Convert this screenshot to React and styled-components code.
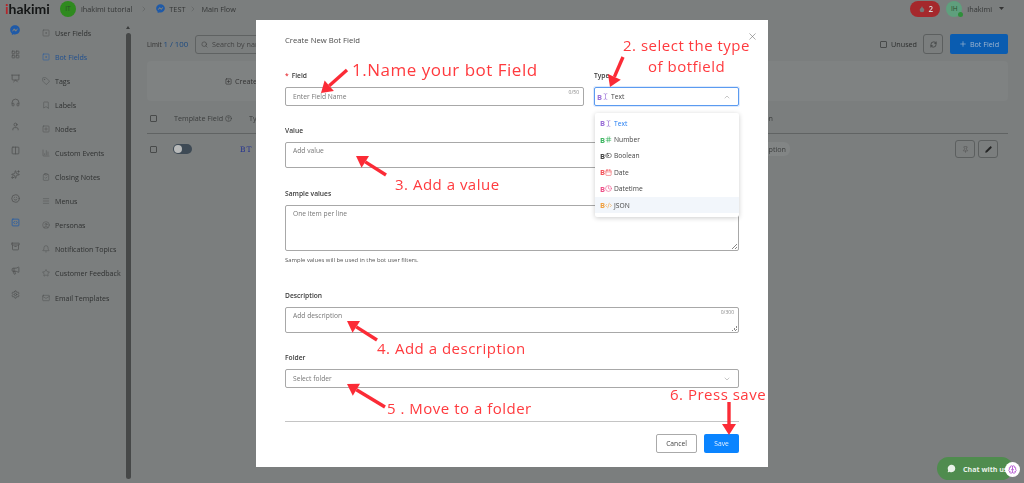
import React from 'react'
import styled, { createGlobalStyle } from 'styled-components'
import {
  LayoutGrid, Presentation, Headphones, User, Columns2, Sparkles, Smile, SquareCode, Archive,
  Megaphone, Settings, SquareDot, Tag, Bookmark, SquarePlus, BarChart3, ClipboardCheck, Menu,
  CircleUser, Bell, Star, Mail, Search, RefreshCw, Plus, Pencil, Pin, X, ChevronDown, ChevronUp,
  ChevronRight, Hash, Calendar, Clock, CodeXml, TextCursor, CircleHelp, Droplet, MessageCircle,
  Brain, ToggleLeft,
} from 'lucide-react'
import { FaFacebookMessenger } from 'react-icons/fa'

const GlobalStyle = createGlobalStyle`
  html, body { margin: 0; padding: 0; background: #7b7e7e; }
  body { font-family: "Open Sans", "Liberation Sans", sans-serif; font-size: 7.2px; color: #2c2e2e; overflow: hidden; }
  * { box-sizing: border-box; }
`

const Page = styled.div`
  width: 1024px;
  height: 483px;
  display: flex;
  flex-direction: column;
  overflow: hidden;
  filter: blur(0.5px);
`

const TopBar = styled.header`
  height: 17px;
  flex: none;
  display: flex;
  align-items: center;
  padding: 0 20px 0 5px;
`

const Logo = styled.div`
  font-family: "Lato", sans-serif;
  font-weight: 700;
  font-size: 14px;
  width: 55px;
  color: #141616;
  span { color: #b3262b; }
`

const Avatar = styled.div`
  width: 16px;
  height: 16px;
  border-radius: 50%;
  background: ${(p) => p.$bg};
  display: flex;
  align-items: center;
  justify-content: center;
  font-size: 6.5px;
  margin-right: 5px;
  position: relative;
  color: #2b4a2b;
`

const OnlineDot = styled.i`
  position: absolute;
  right: -1px;
  bottom: 0;
  width: 5px;
  height: 5px;
  border-radius: 50%;
  background: #2f8f3a;
`

const Crumb = styled.span`
  font-size: 7.3px;
  color: #343636;
  margin-right: ${(p) => p.$gap || 0}px;
  margin-left: ${(p) => p.$left || 0}px;
`

const Spacer = styled.div`
  flex: 1;
`

const MessengerMark = styled(FaFacebookMessenger)`
  margin: 0 4px 0 8px;
  color: #1f5aa8;
`

const AlertPill = styled.div`
  width: 30px;
  height: 16px;
  border-radius: 8px;
  background: #a5282c;
  color: #d8d8d8;
  display: flex;
  align-items: center;
  justify-content: center;
  gap: 3px;
  font-size: 8px;
  font-weight: 600;
  margin-right: 6px;
`

const Body = styled.div`
  flex: 1;
  display: flex;
  min-height: 0;
`

const Rail = styled.nav`
  width: 30px;
  flex: none;
  display: flex;
  flex-direction: column;
  align-items: center;
  padding-top: 1px;
`

const RailItem = styled.div`
  height: 24px;
  flex: none;
  display: flex;
  align-items: center;
  justify-content: center;
  color: ${(p) => (p.$active ? '#1f5aa8' : '#505252')};
`

const SideList = styled.nav`
  width: 96px;
  flex: none;
  padding-top: 4px;
  padding-left: 12px;
`

const SideItem = styled.div`
  height: 24.05px;
  display: flex;
  align-items: center;
  gap: 5px;
  white-space: nowrap;
  font-size: 7.1px;
  color: ${(p) => (p.$active ? '#1f4f8f' : '#2f3131')};
  svg { color: ${(p) => (p.$active ? '#1f5aa8' : '#505252')}; flex: none; }
`

const ScrollTrack = styled.div`
  width: 5px;
  flex: none;
  margin-top: 16px;
  margin-bottom: 4px;
  background: #464848;
  border-radius: 3px;
  position: relative;
  &::before {
    content: '';
    position: absolute;
    top: -7px;
    left: 0;
    border-left: 2.5px solid transparent;
    border-right: 2.5px solid transparent;
    border-bottom: 3px solid #3a3c3c;
  }
`

const Main = styled.main`
  flex: 1;
  min-width: 0;
  padding: 17px 16px 0 16px;
`

const Toolbar = styled.div`
  display: flex;
  align-items: center;
  height: 20px;
`

const LimitText = styled.span`
  font-size: 6.4px;
  color: #333;
  width: 48px;
  flex: none;
  white-space: nowrap;
  b { font-size: 7.8px; font-weight: 400; color: #1c4a80; }
`

const SearchBox = styled.div`
  width: 200px;
  height: 19px;
  border: 1px solid #5f6262;
  border-radius: 3px;
  display: flex;
  align-items: center;
  gap: 4px;
  padding-left: 5px;
  color: #444;
  white-space: nowrap;
`

const CheckSquare = styled.i`
  width: 7px;
  height: 7px;
  border: 1px solid #484a4a;
  border-radius: 1px;
  flex: none;
  margin-right: ${(p) => p.$gap || 0}px;
`

const GhostButton = styled.button`
  width: ${(p) => p.$w || 20}px;
  height: ${(p) => p.$h || 20}px;
  margin-left: ${(p) => p.$ml || 0}px;
  border: 1px solid #5c5f5f;
  border-radius: 3px;
  background: transparent;
  display: flex;
  align-items: center;
  justify-content: center;
  padding: 0;
  color: #2c2e2e;
`

const AddButton = styled.button`
  width: 58px;
  height: 20px;
  margin-left: 7px;
  border: 0;
  border-radius: 2px;
  background: #0a5cb0;
  color: #9fb6cf;
  font: inherit;
  display: flex;
  align-items: center;
  justify-content: center;
  gap: 3px;
`

const Banner = styled.div`
  height: 40px;
  margin-top: 7px;
  border-radius: 4px;
  background: #7f8282;
  display: flex;
  align-items: center;
  padding-left: 78px;
  gap: 3px;
  color: #333;
`

const TableHead = styled.div`
  height: 31px;
  margin-top: 2px;
  border-bottom: 1px solid #606363;
  display: flex;
  align-items: center;
  padding-left: 3px;
  gap: 17px;
  color: #3c3e3e;
`

const HeadCell = styled.span`
  display: flex;
  align-items: center;
  gap: 2px;
  white-space: nowrap;
  margin-right: ${(p) => p.$right || 0}px;
`

const TableRow = styled.div`
  height: 30px;
  display: flex;
  align-items: center;
  padding-left: 3px;
  padding-right: 10px;
`

const Toggle = styled.i`
  width: 19px;
  height: 10px;
  margin-left: 16px;
  margin-right: 48px;
  border-radius: 5px;
  background: #3e4a55;
  display: flex;
  align-items: center;
  padding-left: 1px;
  &::before {
    content: '';
    width: 8px;
    height: 8px;
    border-radius: 50%;
    background: #b8baba;
  }
`

const BTMark = styled.span`
  color: #27358f;
  font-family: "DejaVu Serif", serif;
  font-size: 7.5px;
  letter-spacing: 1px;
`

const DescChip = styled.span`
  margin-right: 165px;
  padding: 2px 4px;
  border-radius: 6px;
  background: #828585;
  color: #3c3e3e;
`

const Backdrop = styled.div`
  position: fixed;
  inset: 0;
  display: flex;
  justify-content: center;
  padding-top: 20px;
  filter: blur(0.35px);
`

const Modal = styled.section`
  width: 512px;
  height: 447px;
  background: #fff;
  position: relative;
  padding: 16px 29px 0;
  color: #333;
`

const ModalTitle = styled.h2`
  margin: 0 0 26px;
  height: 9px;
  line-height: 9px;
  font-size: 7.7px;
  font-weight: 400;
  color: #4b4b4b;
`

const CloseIcon = styled.span`
  position: absolute;
  top: 11px;
  right: 10px;
  color: #666;
  display: flex;
`

const TwoCols = styled.div`
  display: flex;
  gap: 10px;
`

const Field = styled.div`
  flex: ${(p) => (p.$side ? '0 0 145px' : '1')};
  margin-top: ${(p) => p.$mt || 0}px;
  position: relative;
`

const Label = styled.label`
  display: block;
  height: 9px;
  line-height: 9px;
  margin-bottom: 7px;
  font-size: 6.7px;
  font-weight: 600;
  color: #3a3a3a;
  em { color: #e8333a; font-style: normal; margin-right: 3px; }
`

const InputBox = styled.div`
  height: ${(p) => p.$h || 19}px;
  border: 1px solid ${(p) => (p.$focus ? '#5b9bf0' : '#a8a8a8')};
  border-radius: 2px;
  padding: ${(p) => (p.$area ? '3px' : '0')} 7px 0;
  display: flex;
  align-items: ${(p) => (p.$area ? 'flex-start' : 'center')};
  justify-content: space-between;
  color: #777;
  font-size: 6.7px;
  position: relative;
  box-shadow: ${(p) => (p.$focus ? '0 0 0 1px rgba(70,140,240,.18)' : 'none')};
`

const Counter = styled.span`
  position: absolute;
  top: 1px;
  right: 4px;
  font-size: 5px;
  color: #888;
`

const Resize = styled.i`
  position: absolute;
  right: 1px;
  bottom: 1px;
  width: 5px;
  height: 5px;
  background: linear-gradient(135deg, transparent 50%, #888 50%, #888 60%, transparent 60%, transparent 75%, #888 75%, #888 85%, transparent 85%);
`

const Hint = styled.p`
  margin: 5px 0 0;
  height: 8px;
  line-height: 8px;
  font-size: 5.9px;
  color: #555;
`

const ValueRow = styled.span`
  display: flex;
  align-items: center;
  margin-left: -5px;
  color: #444;
`

const Divider = styled.hr`
  margin: 33px 0 0;
  border: 0;
  border-top: 1px solid #c4c4c4;
`

const Actions = styled.div`
  display: flex;
  justify-content: flex-end;
  gap: 7px;
  margin-top: 12px;
`

const CancelButton = styled.button`
  width: 41px;
  height: 19px;
  border: 1px solid #aaa;
  border-radius: 2px;
  background: #fff;
  color: #444;
  font: inherit;
  font-size: 6.7px;
  padding: 0;
`

const SaveButton = styled.button`
  width: 35px;
  height: 19px;
  border: 0;
  border-radius: 2px;
  background: #0a84ff;
  color: #e6f1ff;
  font: inherit;
  font-size: 6.7px;
  padding: 0;
`

const Dropdown = styled.ul`
  position: absolute;
  top: 93px;
  left: 339px;
  width: 144px;
  height: 104px;
  margin: 0;
  padding: 2px 0 0;
  list-style: none;
  background: #fff;
  border-radius: 2px;
  box-shadow: 0 1px 5px rgba(0, 0, 0, 0.2);
`

const Option = styled.li`
  height: 16.4px;
  display: flex;
  align-items: center;
  padding-left: 5px;
  font-size: 6.7px;
  color: ${(p) => (p.$selected ? '#1f7bf2' : '#444')};
  background: ${(p) => (p.$hover ? '#f2f6fb' : 'transparent')};
`

const TypeMark = styled.span`
  width: 14px;
  display: inline-flex;
  align-items: center;
  color: ${(p) => p.$color};
  font-size: 7.5px;
  font-weight: 700;
  flex: none;
`

const Note = styled.div`
  position: absolute;
  left: ${(p) => p.$x}px;
  top: ${(p) => p.$y}px;
  font-family: "Open Sans", sans-serif;
  font-size: ${(p) => p.$size || 15}px;
  line-height: 20px;
  letter-spacing: 0.5px;
  color: #ff3a3e;
  white-space: nowrap;
  filter: blur(0.25px);
`

const ArrowLayer = styled.svg`
  position: absolute;
  inset: 0;
  width: 1024px;
  height: 483px;
  pointer-events: none;
`

const ChatPill = styled.div`
  position: fixed;
  left: 937px;
  top: 457px;
  width: 76px;
  height: 23px;
  border-radius: 12px;
  background: #4f8c4e;
  color: #e9f2e9;
  display: flex;
  align-items: center;
  gap: 7px;
  padding-left: 10px;
  font-weight: 700;
  font-size: 7.1px;
  white-space: nowrap;
  overflow: hidden;
`

const ChatBubble = styled.div`
  position: fixed;
  left: 1005px;
  top: 462px;
  width: 15px;
  height: 15px;
  border-radius: 50%;
  background: #fff;
  display: flex;
  align-items: center;
  justify-content: center;
  color: #b04fd0;
`

const railIcons = [
  [FaFacebookMessenger, '#1f5aa8'], [LayoutGrid], [Presentation], [Headphones], [User], [Columns2],
  [Sparkles], [Smile], [SquareCode, '#1f5aa8'], [Archive], [Megaphone], [Settings],
]

const sideItems = [
  ['User Fields', SquareDot], ['Bot Fields', SquareDot, true], ['Tags', Tag], ['Labels', Bookmark],
  ['Nodes', SquarePlus], ['Custom Events', BarChart3], ['Closing Notes', ClipboardCheck], ['Menus', Menu],
  ['Personas', CircleUser], ['Notification Topics', Bell], ['Customer Feedback', Star], ['Email Templates', Mail],
]

const typeOptions = [
  ['Text', TextCursor, '#9b6fd8', true],
  ['Number', Hash, '#3db561'],
  ['Boolean', ToggleLeft, '#444'],
  ['Date', Calendar, '#f2545b'],
  ['Datetime', Clock, '#ee4f88'],
  ['JSON', CodeXml, '#f0a040', false, true],
]

// tail and tip of each red arrow, in page pixels
const arrows = [
  [347, 70, 321, 93], [623, 57, 610, 87], [386, 175, 356, 156],
  [377, 340, 347, 321], [385, 407, 347, 384], [729, 402, 729, 435],
]

function Arrow({ from, to }) {
  const [x1, y1] = from
  const [x2, y2] = to
  const len = Math.hypot(x2 - x1, y2 - y1)
  const ux = (x2 - x1) / len
  const uy = (y2 - y1) / len
  const bx = x2 - ux * 11
  const by = y2 - uy * 11
  const head = `${x2},${y2} ${bx - uy * 7},${by + ux * 7} ${bx + uy * 7},${by - ux * 7}`
  return (
    <g>
      <line x1={x1} y1={y1} x2={bx} y2={by} stroke="#fb2b36" strokeWidth="3.4" />
      <polygon points={head} fill="#fb2b36" />
    </g>
  )
}

function TypeIcon({ icon: Icon, color }) {
  return (
    <TypeMark $color={color}>
      B<Icon size={7} strokeWidth={2} />
    </TypeMark>
  )
}

export default function App() {
  return (
    <>
      <GlobalStyle />
      <Page>
        <TopBar>
          <Logo><span>i</span>hakimi</Logo>
          <Avatar $bg="#2f8a1f">IT</Avatar>
          <Crumb $gap={8}>ihakimi tutorial</Crumb>
          <ChevronRight size={8} color="#606363" />
          <MessengerMark size={9} />
          <Crumb $gap={4}>TEST</Crumb>
          <ChevronRight size={8} color="#606363" />
          <Crumb $left={4}>Main Flow</Crumb>
          <Spacer />
          <AlertPill><Droplet size={8} fill="#777" strokeWidth={0} />2</AlertPill>
          <Avatar $bg="#5f9f7d">IH<OnlineDot /></Avatar>
          <Crumb $gap={7}>ihakimi</Crumb>
          <svg width="5" height="3" viewBox="0 0 5 3"><path d="M0 0h5L2.5 3z" fill="#333" /></svg>
        </TopBar>
        <Body>
          <Rail>
            {railIcons.map(([Icon, color], i) => (
              <RailItem key={i} $active={!!color}>
                <Icon size={i === 0 ? 10 : 9} />
              </RailItem>
            ))}
          </Rail>
          <SideList>
            {sideItems.map(([name, Icon, active]) => (
              <SideItem key={name} $active={active}>
                <Icon size={8} strokeWidth={1.5} />
                {name}
              </SideItem>
            ))}
          </SideList>
          <ScrollTrack />
          <Main>
            <Toolbar>
              <LimitText>Limit <b>1 / 100</b></LimitText>
              <SearchBox><Search size={7} />Search by name</SearchBox>
              <Spacer />
              <CheckSquare $gap={4} />
              <span>Unused</span>
              <GhostButton $ml={6}><RefreshCw size={7} /></GhostButton>
              <AddButton><Plus size={8} />Bot Field</AddButton>
            </Toolbar>
            <Banner><SquarePlus size={7} />Create</Banner>
            <TableHead>
              <CheckSquare />
              <HeadCell>Template Field <CircleHelp size={7} /></HeadCell>
              <HeadCell>Type</HeadCell>
              <Spacer />
              <HeadCell $right={235}>Description</HeadCell>
            </TableHead>
            <TableRow>
              <CheckSquare />
              <Toggle />
              <BTMark>BT</BTMark>
              <Spacer />
              <DescChip>Description</DescChip>
              <GhostButton $w={20} $h={18}><Pin size={7} color="#555" /></GhostButton>
              <GhostButton $w={20} $h={18} $ml={3}><Pencil size={7} fill="#222" /></GhostButton>
            </TableRow>
          </Main>
        </Body>
      </Page>
      <Backdrop>
        <Modal>
          <ModalTitle>Create New Bot Field</ModalTitle>
          <CloseIcon><X size={11} strokeWidth={1.2} /></CloseIcon>
          <TwoCols>
            <Field>
              <Label><em>*</em>Field</Label>
              <InputBox>Enter Field Name<Counter>0/50</Counter></InputBox>
            </Field>
            <Field $side>
              <Label>Type</Label>
              <InputBox $focus>
                <ValueRow><TypeIcon icon={TextCursor} color="#9b6fd8" />Text</ValueRow>
                <ChevronUp size={8} color="#aaa" />
              </InputBox>
            </Field>
          </TwoCols>
          <Field $mt={20}>
            <Label>Value</Label>
            <InputBox $h={26} $area>Add value<Resize /></InputBox>
          </Field>
          <Field $mt={21}>
            <Label>Sample values</Label>
            <InputBox $h={46} $area>One item per line<Resize /></InputBox>
            <Hint>Sample values will be used in the bot user filters.</Hint>
          </Field>
          <Field $mt={27}>
            <Label>Description</Label>
            <InputBox $h={26} $area>Add description<Counter>0/300</Counter><Resize /></InputBox>
          </Field>
          <Field $mt={20}>
            <Label>Folder</Label>
            <InputBox>Select folder<ChevronDown size={8} color="#aaa" /></InputBox>
          </Field>
          <Divider />
          <Actions>
            <CancelButton>Cancel</CancelButton>
            <SaveButton>Save</SaveButton>
          </Actions>
          <Dropdown>
            {typeOptions.map(([name, icon, color, selected, hover]) => (
              <Option key={name} $selected={selected} $hover={hover}>
                <TypeIcon icon={icon} color={color} />
                {name}
              </Option>
            ))}
          </Dropdown>
        </Modal>
      </Backdrop>
      <ChatPill><MessageCircle size={9} fill="#e9f2e9" strokeWidth={0} />Chat with us</ChatPill>
      <ChatBubble><Brain size={9} /></ChatBubble>
      <Note $x={352} $y={60} $size={17}>1.Name your bot Field</Note>
      <Note $x={623} $y={35}>2. select the type</Note>
      <Note $x={648} $y={56}>of botfield</Note>
      <Note $x={395} $y={174}>3. Add a value</Note>
      <Note $x={377} $y={338}>4. Add a description</Note>
      <Note $x={387} $y={398}>5 . Move to a folder</Note>
      <Note $x={670} $y={384}>6. Press save</Note>
      <ArrowLayer viewBox="0 0 1024 483">
        {arrows.map(([x1, y1, x2, y2], i) => (
          <Arrow key={i} from={[x1, y1]} to={[x2, y2]} />
        ))}
      </ArrowLayer>
    </>
  )
}
